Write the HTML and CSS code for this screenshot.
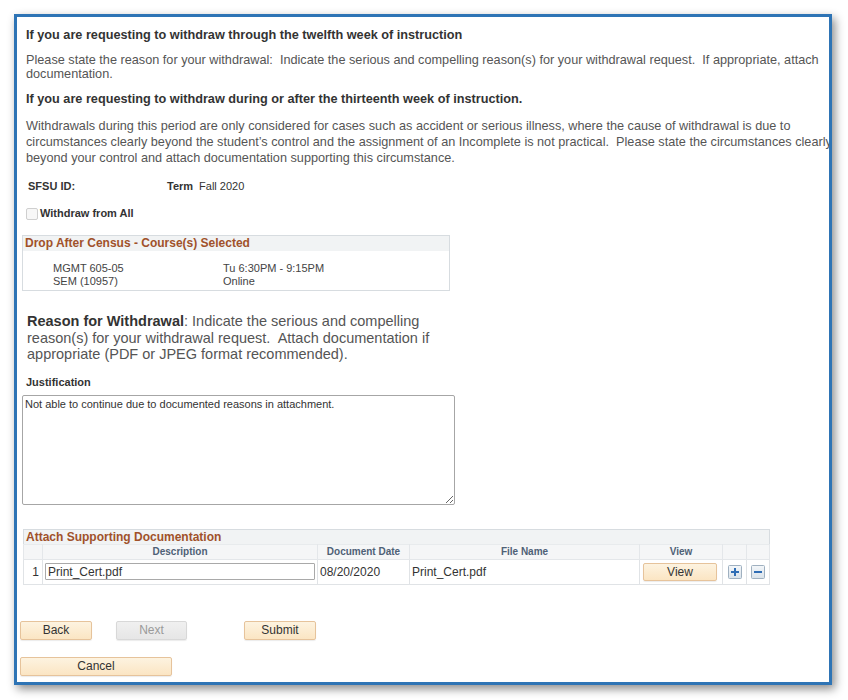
FILE: index.html
```html
<!DOCTYPE html>
<html>
<head>
<meta charset="utf-8">
<link rel="stylesheet" href="styles.css">
</head>
<body>
<div class="frame">
  <div class="content">
    <h2 class="h">If you are requesting to withdraw through the twelfth week of instruction</h2>
    <p class="p1">Please state the reason for your withdrawal:&nbsp; Indicate the serious and compelling reason(s) for your withdrawal request.&nbsp; If appropriate, attach documentation.</p>
    <h2 class="h h2">If you are requesting to withdraw during or after the thirteenth week of instruction.</h2>
    <p class="p2">Withdrawals during this period are only considered for cases such as accident or serious illness, where the cause of withdrawal is due to circumstances clearly beyond the student’s control and the assignment of an Incomplete is not practical.&nbsp; Please state the circumstances clearly beyond your control and attach documentation supporting this circumstance.</p>

    <div class="idrow">
      <span class="lbl sfsu">SFSU ID:</span>
      <span class="lbl">Term</span>
      <span class="val">Fall 2020</span>
    </div>

    <div class="chkrow">
      <span class="chk"></span>
      <span class="lbl">Withdraw from All</span>
    </div>

    <div class="coursebox">
      <div class="boxhead">Drop After Census - Course(s) Selected</div>
      <div class="courses">
        <div class="ccol c1"><div>MGMT 605-05</div><div>SEM (10957)</div></div>
        <div class="ccol"><div>Tu 6:30PM - 9:15PM</div><div>Online</div></div>
      </div>
    </div>

    <p class="reason"><b>Reason for Withdrawal</b>: Indicate the serious and compelling reason(s) for your withdrawal request.&nbsp; Attach documentation if appropriate (PDF or JPEG format recommended).</p>

    <div class="lbl just">Justification</div>
    <textarea class="ta">Not able to continue due to documented reasons in attachment.</textarea>

    <table class="grid">
      <colgroup>
        <col class="w1"><col class="w2"><col class="w3"><col class="w4"><col class="w5"><col class="w6"><col class="w7">
      </colgroup>
      <tr><td class="gtitle" colspan="7">Attach Supporting Documentation</td></tr>
      <tr class="ghead">
        <th></th>
        <th>Description</th>
        <th>Document Date</th>
        <th>File Name</th>
        <th>View</th>
        <th></th>
        <th></th>
      </tr>
      <tr class="grow">
        <td class="num">1</td>
        <td class="dc"><input class="desc" type="text" value="Print_Cert.pdf"></td>
        <td>08/20/2020</td>
        <td>Print_Cert.pdf</td>
        <td class="vc"><span class="btn vbtn">View</span></td>
        <td class="ic"><svg width="14" height="14" viewBox="0 0 14 14"><defs><linearGradient id="g1" x1="0" y1="0" x2="0" y2="1"><stop offset="0" stop-color="#f4f7fa"/><stop offset="1" stop-color="#d9e2ea"/></linearGradient></defs><rect x="0.5" y="0.5" width="13" height="13" rx="1" fill="url(#g1)" stroke="#9fb0c0"/><rect x="3" y="6" width="8" height="2" fill="#2f6db5"/><rect x="6" y="3" width="2" height="8" fill="#2f6db5"/></svg></td>
        <td class="ic"><svg width="14" height="14" viewBox="0 0 14 14"><defs><linearGradient id="g2" x1="0" y1="0" x2="0" y2="1"><stop offset="0" stop-color="#f4f7fa"/><stop offset="1" stop-color="#d9e2ea"/></linearGradient></defs><rect x="0.5" y="0.5" width="13" height="13" rx="1" fill="url(#g2)" stroke="#9fb0c0"/><rect x="3" y="6" width="8" height="2" fill="#2f6db5"/></svg></td>
      </tr>
    </table>

    <div class="btnrow">
      <span class="btn b72">Back</span>
      <span class="btn b72 dis">Next</span>
      <span class="btn b72 sub">Submit</span>
    </div>
    <div class="btnrow2">
      <span class="btn b152">Cancel</span>
    </div>
  </div>
</div>
</body>
</html>
```
FILE: styles.css
```css
html, body {
  margin: 0;
  padding: 0;
  background: #ffffff;
}
body {
  width: 848px;
  height: 700px;
  overflow: hidden;
  font-family: "Liberation Sans", Arial, sans-serif;
}
.frame {
  margin: 14px 0 0 14px;
  width: 812px;
  height: 665px;
  border: 3px solid #2e74b5;
  background: #fff;
  box-shadow: 3px 4px 9px rgba(0, 0, 0, 0.45);
  overflow: hidden;
}
.content {
  padding: 11px 0 0 5px;
  width: 830px;
}
.h {
  margin: 0 0 0 4px;
  font-size: 12.7px;
  line-height: 15px;
  font-weight: bold;
  color: #333;
}
.h2 {
  margin-top: 11px;
}
.p1 {
  margin: 10px 0 0 4px;
  width: 820px;
  font-size: 12.7px;
  line-height: 14px;
  color: #555;
}
.p2 {
  margin: 11px 0 0 4px;
  width: 820px;
  font-size: 12.7px;
  line-height: 16px;
  color: #555;
}
.lbl {
  font-size: 11px;
  font-weight: bold;
  color: #333;
  line-height: 13px;
}
.idrow {
  margin: 14px 0 0 6px;
  display: flex;
  align-items: baseline;
  height: 13px;
}
.sfsu {
  width: 139px;
}
.val {
  font-size: 11px;
  color: #333;
  margin-left: 6px;
}
.chkrow {
  margin: 14px 0 0 4px;
  display: flex;
  align-items: center;
  gap: 2px;
  height: 13px;
}
.chk {
  width: 10px;
  height: 10px;
  border: 1px solid #cfcfcf;
  border-radius: 2px;
  background: #f7f7f7;
}
.coursebox {
  margin-top: 15px;
  width: 426px;
  height: 54px;
  border: 1px solid #d7dce0;
}
.boxhead {
  background: #f1f3f4;
  height: 15px;
  line-height: 14px;
  font-size: 12px;
  font-weight: bold;
  color: #a0512a;
  padding-left: 2px;
}
.courses {
  display: flex;
  padding: 11px 0 0 30px;
  font-size: 11px;
  line-height: 13px;
  color: #444;
}
.c1 {
  width: 170px;
}
.reason {
  margin: 22px 0 0 5px;
  width: 420px;
  font-size: 14.5px;
  line-height: 16.5px;
  color: #555;
}
.reason b {
  color: #333;
}
.just {
  margin: 13px 0 0 4px;
}
.ta {
  display: block;
  margin: 6px 0 0 0;
  box-sizing: border-box;
  width: 433px;
  height: 110px;
  border: 1px solid #a6a6a6;
  border-radius: 2px;
  padding: 2px 2px;
  font-family: "Liberation Sans", Arial, sans-serif;
  font-size: 11px;
  line-height: 13px;
  color: #333;
  resize: both;
  background: #fff;
}
.grid {
  margin: 24px 0 0 1px;
  border-collapse: collapse;
  border: 1px solid #d7dce0;
  width: 746px;
  table-layout: fixed;
}
.w1 { width: 19px; }
.w2 { width: 275px; }
.w3 { width: 92px; }
.w4 { width: 230px; }
.w5 { width: 83px; }
.w6 { width: 24px; }
.w7 { width: 23px; }
.gtitle {
  background: #f1f3f4;
  height: 14px;
  padding: 0 0 0 2px;
  font-size: 12px;
  line-height: 14px;
  font-weight: bold;
  color: #a0512a;
}
.ghead th {
  background: #f5f6f7;
  height: 14px;
  padding: 0;
  font-size: 10px;
  line-height: 14px;
  font-weight: bold;
  color: #4f6176;
  border: 1px solid #e4e7ea;
  border-top: 1px solid #e8ebed;
}
.grow td {
  height: 24px;
  padding: 0 2px;
  font-size: 12px;
  color: #333;
  border: 1px solid #e0e3e6;
  white-space: nowrap;
  overflow: hidden;
}
.grow td.num {
  text-align: right;
  padding: 0 3px 0 0;
}
.grow td.dc {
  padding: 0 0 0 2px;
}
.desc {
  display: block;
  box-sizing: border-box;
  width: 270px;
  height: 17px;
  margin: 0;
  border: 1px solid #a9a9a9;
  border-radius: 1px;
  padding: 0 2px;
  font-family: "Liberation Sans", Arial, sans-serif;
  font-size: 12px;
  color: #333;
  background: #fff;
}
.grow td.vc {
  padding: 0 3px;
}
.grow td.ic {
  padding: 0;
  text-align: center;
}
.grow td.ic svg {
  display: block;
  margin: 0 auto;
}
.btn {
  display: inline-flex;
  align-items: center;
  justify-content: center;
  box-sizing: border-box;
  height: 19px;
  border: 1px solid #e6c39b;
  border-radius: 2px;
  background: linear-gradient(#fdf3e0, #fbe5c3);
  font-size: 12px;
  color: #333;
  box-shadow: 0 1px 1px rgba(0, 0, 0, 0.08);
}
.vbtn {
  width: 74px;
  height: 18px;
}
.btnrow {
  margin: 36px 0 0 -2px;
  display: flex;
}
.b72 {
  width: 72px;
  margin-right: 24px;
}
.dis {
  width: 71px;
  background: linear-gradient(#f0f0f0, #e6e6e6);
  border-color: #d8d8d8;
  color: #9a9a9a;
  margin-right: 57px;
}
.sub {
  margin-right: 0;
}
.btnrow2 {
  margin: 17px 0 0 -2px;
  display: flex;
}
.b152 {
  width: 152px;
}
```
